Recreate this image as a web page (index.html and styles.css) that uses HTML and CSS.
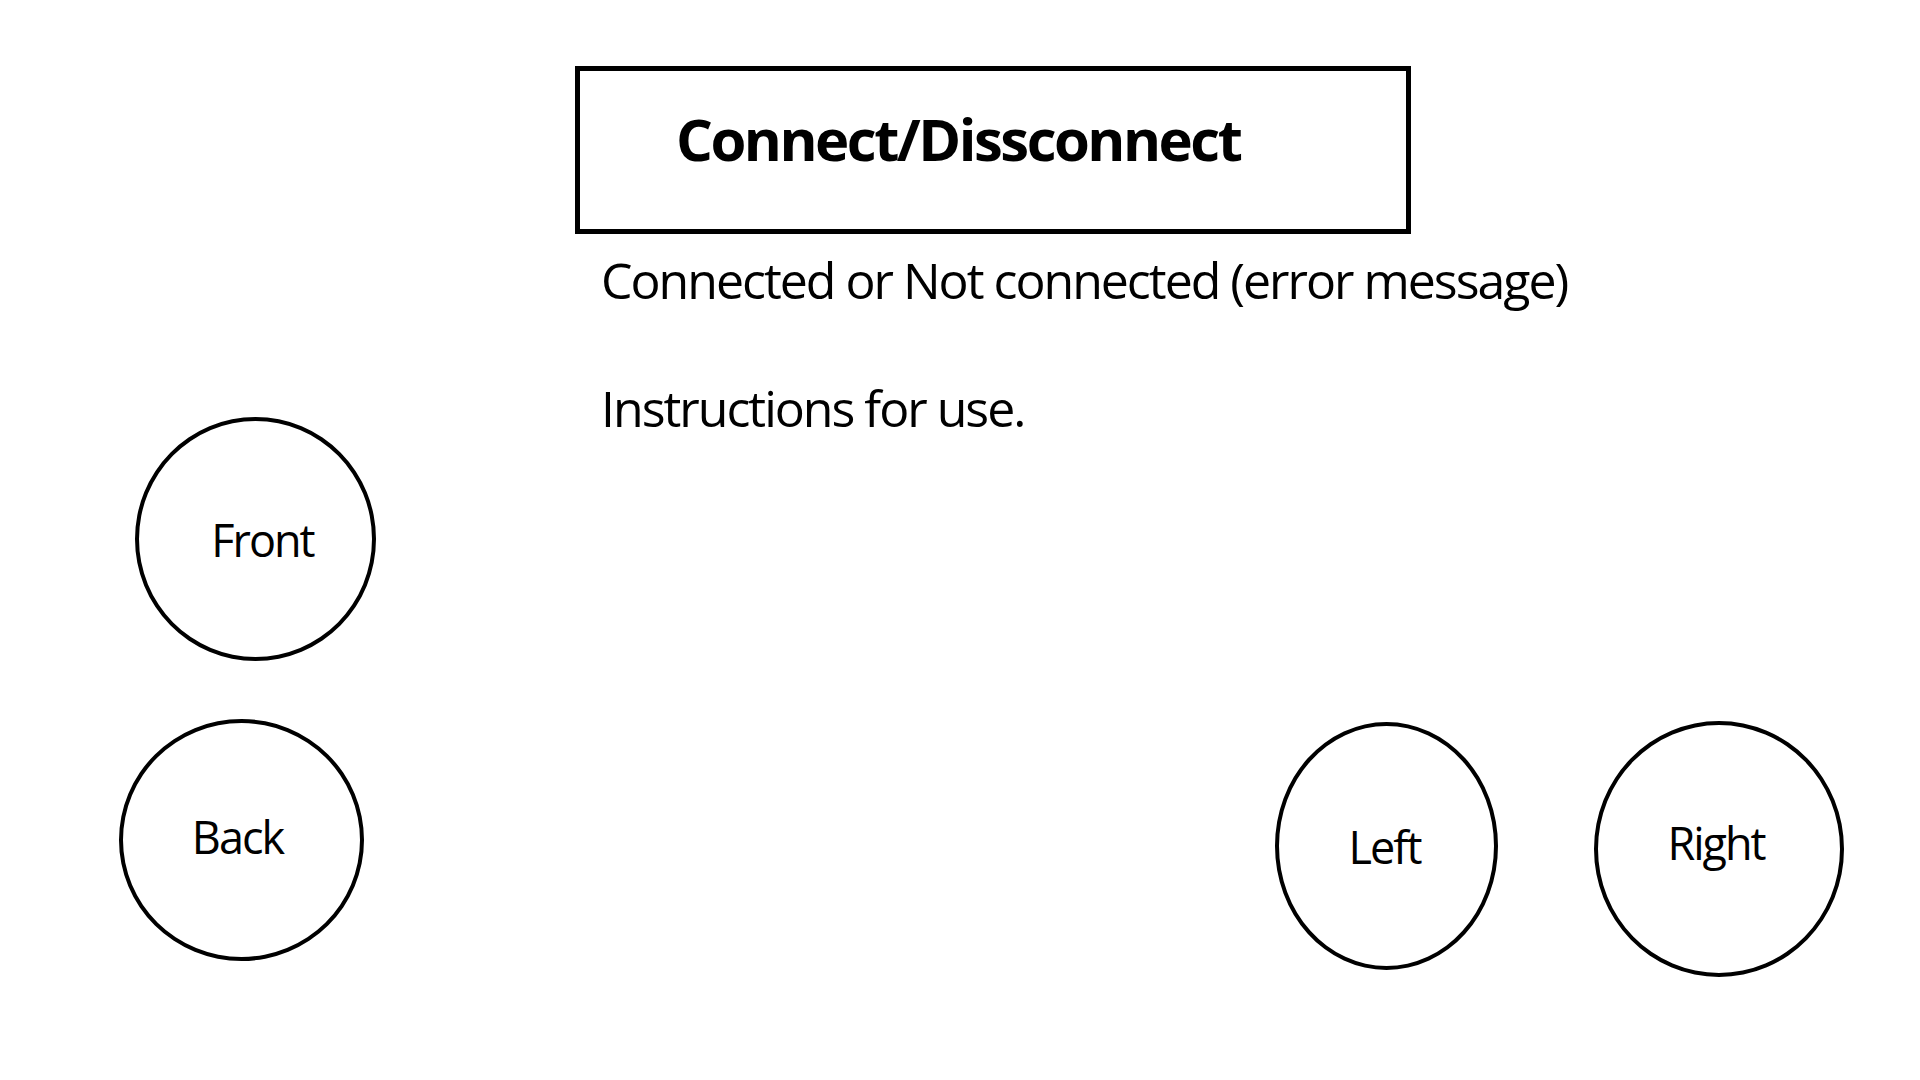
FILE: index.html
```html
<!DOCTYPE html>
<html lang="en">
<head>
    <meta charset="UTF-8">
    <title>Robot Remote</title>
    <link rel="stylesheet" href="styles.css">
</head>
<body>
    <main class="sketch">
        <!-- Connection header -->
        <section class="header">
            <div class="connect-box">
                <span class="connect-label">Connect/Dissconnect</span>
            </div>
            <p class="status">Connected or Not connected (error message)</p>
            <p class="instructions">Instructions for use.</p>
        </section>

        <!-- Drive controls -->
        <div class="control front"><span>Front</span></div>
        <div class="control back"><span>Back</span></div>
        <div class="control left"><span>Left</span></div>
        <div class="control right"><span>Right</span></div>
    </main>
</body>
</html>
```

FILE: styles.css
```css
/* General Styles */
body {
    margin: 0;
    background-color: #fff;
    color: #000;
    font-family: 'Open Sans', Arial, sans-serif;
    overflow: hidden;
}

.sketch {
    position: relative;
    width: 1920px;
    height: 1080px;
}

/* Connection header */
.header {
    padding: 66px 0 0 575px;
}

.connect-box {
    box-sizing: border-box;
    width: 836px;
    height: 168px;
    border: 5px solid #000;
    padding: 39px 0 0 96px;
}

.connect-label {
    display: block;
    font-size: 58px;
    font-weight: 700;
    letter-spacing: -2.5px;
    line-height: 1;
}

.status,
.instructions {
    margin: 0 0 0 26px;
    font-size: 50px;
    letter-spacing: -2px;
    line-height: 1;
}

.status {
    margin-top: 21px;
}

.instructions {
    margin-top: 78px;
}

/* Drive controls */
.control {
    position: absolute;
    box-sizing: border-box;
    border: 4px solid #000;
    border-radius: 50%;
    display: flex;
    align-items: center;
    justify-content: center;
    font-size: 45px;
    letter-spacing: -2px;
}

.control.front {
    left: 135px;
    top: 417px;
    width: 241px;
    height: 244px;
    padding-left: 14px;
}

.control.back {
    left: 119px;
    top: 719px;
    width: 245px;
    height: 242px;
    padding: 0 8px 8px 0;
}

.control.left {
    left: 1275px;
    top: 722px;
    width: 223px;
    height: 248px;
    padding-right: 4px;
}

.control.right {
    left: 1594px;
    top: 721px;
    width: 250px;
    height: 256px;
    padding: 0 6px 14px 0;
}
```
